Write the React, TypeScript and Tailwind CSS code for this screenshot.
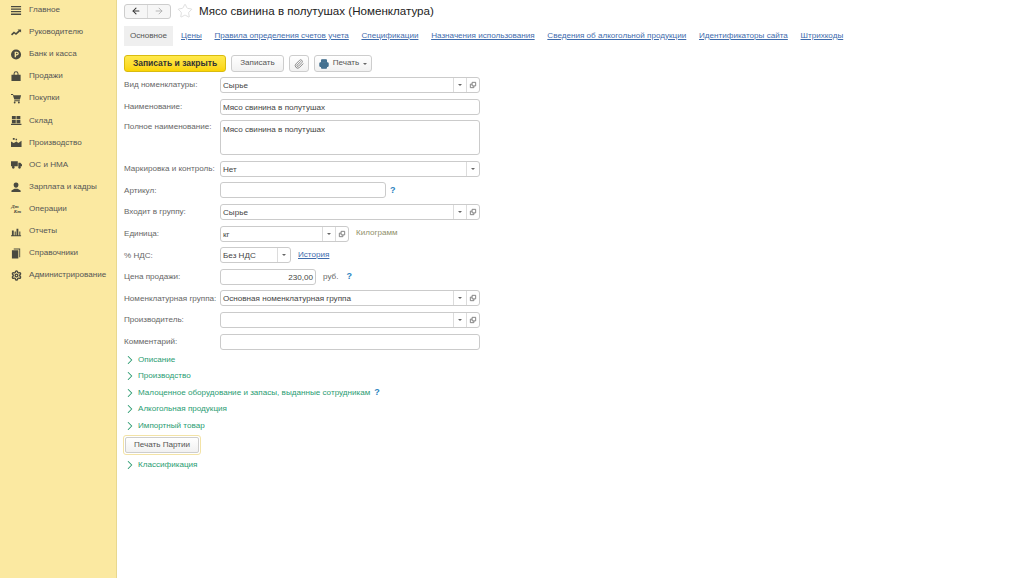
import React from 'react';
import { ArrowLeft, ArrowRight, ChevronRight, Paperclip, Printer, Settings, Star } from 'lucide-react';

const icons: Record<string, React.ReactNode> = {
  main: <path d="M0 1h11v1.4H0zM0 3.800h11v1.400H0zM0 6.600h11V8H0zM0 9.400h11v1.400H0z" />,
  chart: <path d="M0 8 3.200 4.800l2.200 1.800L8.400 3.600 7 2.600h4v3.400L9.800 4.800 5.500 8.600 3.400 7 1.200 9.200z" />,
  bank: <path fillRule="evenodd" d="M5.500 0.500a5.500 5.500 0 1 1 0 11 5.500 5.500 0 0 1 0-11zM4 3v6h1.400V7h1.100a2 2 0 0 0 0-4zM5.400 4.200h1a.8.8 0 0 1 0 1.600h-1z" />,
  sales: <path fillRule="evenodd" d="M0.500 4h2.300V3a2.700 2.700 0 0 1 5.400 0v1h2.300v7H.5zM3.900 4h3.200V3a1.600 1.600 0 0 0-3.200 0z" />,
  cart: <path d="M0 1h2.200l.4 1.400H11L9.800 7H3.600L2 2.200H0zM3.600 8h6v1h-6zM4 9.400a1 1 0 1 1 0 2 1 1 0 0 1 0-2zM8.600 9.400a1 1 0 1 1 0 2 1 1 0 0 1 0-2z" />,
  stock: <path d="M1 1h4.200v3.600H1zM6 1h4.200v3.600H6zM1 5.400h4.200V9H1zM6 5.400h4.200V9H6zM0 9.600h11.400V11H0z" />,
  prod: <path d="M2 1h2v2H2zM5 2h1.600v1.600H5zM0 5l3 1.600L6 5l2 1.500L11.500 4v7H0z" />,
  truck: <path d="M0 2.500h7.400V8H0zM8 4h2.200L12 6v2H8zM2.500 7.600a1.500 1.500 0 1 1 0 3 1.500 1.500 0 0 1 0-3zM9.300 7.600a1.500 1.500 0 1 1 0 3 1.500 1.500 0 0 1 0-3z" />,
  person: <path d="M5.500.5a2.600 2.600 0 0 1 2.600 2.800c0 1.600-1.100 3-2.600 3S2.900 4.900 2.900 3.300A2.600 2.600 0 0 1 5.500.5zM0.500 11V9.400L3.800 7.400h3.400l3.300 2V11z" />,
  bars: <path d="M1 5h2v5H1zM4 6h1.200v4H4zM6 3h2v7H6zM9 6h1.200v4H9zM0 10.200h11v.9H0z" />,
  book: <path d="M3 .5h7v9.500H9V1.500H3zM1 2.500h7v9H1z" />,
};

function MenuIcon({ name }: { name: string }) {
  if (name === 'ops') {
    return (
      <span className="flex h-3 w-3 flex-col items-center justify-center text-[5px] font-bold italic leading-[5px] text-[#4a4a40] [font-family:'Liberation_Serif',serif]">
        <span className="-ml-[2px]">Дт</span>
        <span className="ml-[3px]">Кт</span>
      </span>
    );
  }
  if (name === 'gear') return <Settings size={11} strokeWidth={3} className="text-[#4a4a40]" />;
  return (
    <svg width="11" height="11" viewBox="0 0 12 12" fill="#4a4a40">
      {icons[name]}
    </svg>
  );
}

const menu = [
  ['main', 'Главное'],
  ['chart', 'Руководителю'],
  ['bank', 'Банк и касса'],
  ['sales', 'Продажи'],
  ['cart', 'Покупки'],
  ['stock', 'Склад'],
  ['prod', 'Производство'],
  ['truck', 'ОС и НМА'],
  ['person', 'Зарплата и кадры'],
  ['ops', 'Операции'],
  ['bars', 'Отчеты'],
  ['book', 'Справочники'],
  ['gear', 'Администрирование'],
];

const tabs = [
  'Цены',
  'Правила определения счетов учета',
  'Спецификации',
  'Назначения использования',
  'Сведения об алкогольной продукции',
  'Идентификаторы сайта',
  'Штрихкоды',
];

const groups = ['Описание', 'Производство', 'Малоценное оборудование и запасы, выданные сотрудникам', 'Алкогольная продукция', 'Импортный товар'];

const Help = () => <span className="text-[9px] font-bold text-[#2b83c0]">?</span>;

function Caret() {
  return <span className="h-0 w-0 border-x-[2px] border-t-[2px] border-x-transparent border-t-[#666]" />;
}

function OpenIcon() {
  return (
    <svg width="8" height="8" viewBox="0 0 9 9" fill="none" stroke="#777" strokeWidth="1">
      <path d="M3.500 1.500h4v4h-4zM3.500 3.500h-2v4h4v-2" />
    </svg>
  );
}

function SelectBox({ value, width, open = true }: { value: string; width: string; open?: boolean }) {
  return (
    <div className={`flex h-[16px] items-stretch rounded-[3px] border border-[#cbcbcb] bg-white ${width}`}>
      <span className="flex-1 truncate pl-[2px] leading-[15px] text-[#444]">{value}</span>
      <span className="flex w-[13px] items-center justify-center border-l border-[#dcdcdc]">
        <Caret />
      </span>
      {open && (
        <span className="flex w-[13px] items-center justify-center border-l border-[#dcdcdc]">
          <OpenIcon />
        </span>
      )}
    </div>
  );
}

function TextBox({ value = '', width = 'w-[260px]', height = 'h-[16px]', right = false }: { value?: string; width?: string; height?: string; right?: boolean }) {
  return (
    <div className={`rounded-[3px] border border-[#cbcbcb] bg-white px-[2px] leading-[15px] text-[#444] ${width} ${height} ${right ? 'text-right' : ''}`}>
      {value}
    </div>
  );
}

function Row({ label, children, className = '' }: { label: string; children: React.ReactNode; className?: string }) {
  return (
    <div className={`flex items-center ${className}`}>
      <span className="w-[96px] shrink-0 whitespace-nowrap pt-[1px] text-[#666]">{label}</span>
      {children}
    </div>
  );
}

function Group({ title, help }: { title: string; help?: boolean }) {
  return (
    <div className="-ml-[1px] flex h-[16.500px] items-center gap-[1px] whitespace-nowrap text-[#2a9c72]">
      <ChevronRight size={14} strokeWidth={1.800} className="text-[#2a9a70]" />
      <span>{title}</span>
      {help && <span className="ml-[3px]"><Help /></span>}
    </div>
  );
}

export default function App() {
  return (
    <div className="flex h-[578px] w-[1024px] overflow-hidden bg-white text-[8.100px] [font-family:'Liberation_Sans',Arial,sans-serif]">
      <aside className="flex w-[117px] shrink-0 flex-col border-r border-[#e8d88f] bg-[#fbe9a1]">
        {menu.map(([icon, name]) => (
          <div key={name} className="flex h-[22.130px] items-center whitespace-nowrap pl-[10px] text-[#555] first:-mt-[1px]">
            <span className="mr-[7px] flex w-[12px] justify-center">
              <MenuIcon name={icon} />
            </span>
            {name}
          </div>
        ))}
      </aside>

      <main className="flex-1 pl-[7px]">
        <div className="flex h-[22px] items-center">
          <div className="flex h-[15px] w-[47px] overflow-hidden rounded-[3px] border border-[#cdcdcd] bg-[#f6f6f6]">
            <span className="flex flex-1 items-center justify-center border-r border-[#dcdcdc]">
              <ArrowLeft size={10} strokeWidth={2.500} className="text-[#333]" />
            </span>
            <span className="flex flex-1 items-center justify-center">
              <ArrowRight size={10} strokeWidth={2} className="text-[#aaa]" />
            </span>
          </div>
          <Star size={16} strokeWidth={1} className="ml-[6px] text-[#cfcfcf]" />
          <h1 className="ml-[6px] text-[11.600px] font-normal text-[#222]">Мясо свинина в полутушах (Номенклатура)</h1>
        </div>

        <div className="mt-[4px] flex h-[20px] items-stretch">
          <span className="flex w-[49px] items-center justify-center bg-[#efefef] text-[#555]">Основное</span>
          <div className="ml-[8px] flex items-center gap-[12.700px] whitespace-nowrap text-[#3f6cad] underline">
            {tabs.map(t => (
              <span key={t}>{t}</span>
            ))}
          </div>
        </div>

        <div className="mt-[9px] flex h-[17px] items-stretch">
          <button className="w-[102px] rounded-[3px] border border-[#d9bb10] bg-gradient-to-b from-[#ffe94a] to-[#fbd400] text-[8.500px] font-bold text-[#333]">Записать и закрыть</button>
          <button className="ml-[5px] w-[53px] rounded-[3px] border border-[#cdcdcd] bg-gradient-to-b from-white to-[#f1f1f1] text-[#555]">Записать</button>
          <button className="ml-[5px] flex w-[20px] items-center justify-center rounded-[3px] border border-[#cdcdcd] bg-gradient-to-b from-white to-[#f1f1f1]">
            <Paperclip size={10} className="text-[#777]" />
          </button>
          <button className="ml-[5px] flex w-[58px] items-center justify-center gap-[4px] rounded-[3px] border border-[#cdcdcd] bg-gradient-to-b from-white to-[#f1f1f1] text-[#555]">
            <Printer size={10} strokeWidth={2.500} className="fill-[#44708f] text-[#44708f]" />
            Печать
            <Caret />
          </button>
        </div>

        <div className="mt-[5px] flex flex-col gap-[5.600px]">
          <Row label="Вид номенклатуры:">
            <SelectBox value="Сырье" width="w-[260px]" />
          </Row>
          <Row label="Наименование:">
            <TextBox value="Мясо свинина в полутушах" />
          </Row>
          <Row label="Полное наименование:" className="!items-start">
            <TextBox value="Мясо свинина в полутушах" height="h-[35px] pt-[1px]" />
          </Row>
          <Row label="Маркировка и контроль:">
            <SelectBox value="Нет" width="w-[260px]" open={false} />
          </Row>
          <Row label="Артикул:">
            <TextBox width="w-[166px]" />
            <span className="ml-[4px]">
              <Help />
            </span>
          </Row>
          <Row label="Входит в группу:">
            <SelectBox value="Сырье" width="w-[260px]" />
          </Row>
          <Row label="Единица:">
            <SelectBox value="кг" width="w-[129px]" />
            <span className="ml-[7px] text-[#8f8f6a]">Килограмм</span>
          </Row>
          <Row label="% НДС:">
            <SelectBox value="Без НДС" width="w-[71px]" open={false} />
            <span className="ml-[7px] text-[#3f6cad] underline">История</span>
          </Row>
          <Row label="Цена продажи:">
            <TextBox value="230,00" width="w-[96px]" right />
            <span className="ml-[7px] text-[#666]">руб.</span>
            <span className="ml-[8px]">
              <Help />
            </span>
          </Row>
          <Row label="Номенклатурная группа:">
            <SelectBox value="Основная номенклатурная группа" width="w-[260px]" />
          </Row>
          <Row label="Производитель:">
            <SelectBox value="" width="w-[260px]" />
          </Row>
          <Row label="Комментарий:">
            <TextBox />
          </Row>
        </div>

        <div className="mt-[2px]">
          {groups.map((g, i) => (
            <Group key={g} title={g} help={i === 2} />
          ))}
        </div>
        <div className="-ml-[1px] mt-[1px] w-[78px] rounded-[3px] border border-[#f3e3a6] p-[1px]">
          <button className="h-[16px] w-full rounded-[2px] border border-[#cdcdcd] bg-gradient-to-b from-white to-[#f1f1f1] text-[#555]">Печать Партии</button>
        </div>
        <div className="mt-[2px]">
          <Group title="Классификация" />
        </div>
      </main>
    </div>
  );
}
